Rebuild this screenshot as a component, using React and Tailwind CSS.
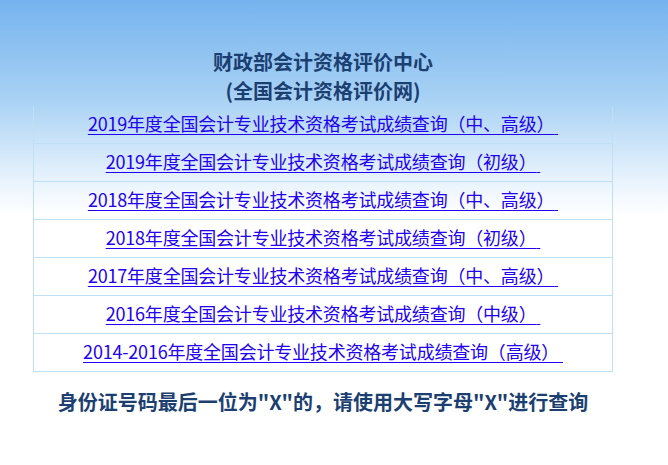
import React from 'react';

const links = [
    '2019年度全国会计专业技术资格考试成绩查询（中、高级）',
    '2019年度全国会计专业技术资格考试成绩查询（初级）',
    '2018年度全国会计专业技术资格考试成绩查询（中、高级）',
    '2018年度全国会计专业技术资格考试成绩查询（初级）',
    '2017年度全国会计专业技术资格考试成绩查询（中、高级）',
    '2016年度全国会计专业技术资格考试成绩查询（中级）',
    '2014-2016年度全国会计专业技术资格考试成绩查询（高级）',
];

export default function App() {
    return (
        <div
            className="min-h-[465px] w-full bg-[linear-gradient(to_bottom,#75b3ee_0px,#a9d2f4_100px,#e4f1fc_175px,#ffffff_215px)]"
            style={{ fontFamily: '"Noto Sans CJK SC", "Noto Sans", sans-serif' }}
        >
            <div className="ml-[33px] w-[580px] pt-[47px]">
                {/* Header */}
                <h1 className="text-center text-[20px] font-bold leading-[29px] text-[#1c3f72]">
                    财政部会计资格评价中心
                    <br />
                    (全国会计资格评价网)
                </h1>

                {/* Score query links, no top rule on the list */}
                <div className="mt-[2px] border-x border-b border-[#bfe0f4]">
                    {links.map((text, i) => (
                        <div
                            key={i}
                            className={`flex items-center justify-center pb-[4px] ${i === 0 ? 'h-[36px]' : 'h-[38px] border-t border-[#bfe0f4]'}`}
                        >
                            <a href="#" className="text-[18px] leading-none tracking-[-0.2px] text-[#2200f0] underline underline-offset-[3px]">
                                {text}&nbsp;
                            </a>
                        </div>
                    ))}
                </div>

                <p className="mt-[15px] text-center text-[20px] font-bold leading-[30px] text-[#1c3f72]">
                    身份证号码最后一位为"X"的，请使用大写字母"X"进行查询
                </p>
            </div>
        </div>
    );
}
